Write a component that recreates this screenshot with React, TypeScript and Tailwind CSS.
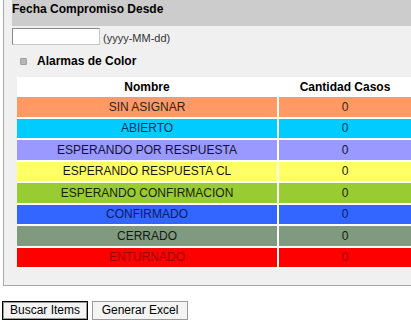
const estados = [
  { nombre: 'SIN ASIGNAR', bg: 'bg-[#ff9966]', fg: 'text-[#33231a]' },
  { nombre: 'ABIERTO', bg: 'bg-[#00ccff]', fg: 'text-[#003355]' },
  { nombre: 'ESPERANDO POR RESPUESTA', bg: 'bg-[#9999ff]', fg: 'text-[#111133]' },
  { nombre: 'ESPERANDO RESPUESTA CL', bg: 'bg-[#ffff66]', fg: 'text-[#1a1a0a]' },
  { nombre: 'ESPERANDO CONFIRMACION', bg: 'bg-[#99cc33]', fg: 'text-[#1a220a]' },
  { nombre: 'CONFIRMADO', bg: 'bg-[#3366ff]', fg: 'text-[#0a1a66]' },
  { nombre: 'CERRADO', bg: 'bg-[#7f9a7f]', fg: 'text-[#111a11]' },
  { nombre: 'ENTURNADO', bg: 'bg-[#ff0000]', fg: 'text-[#990000]' },
];

export default function App() {
  return (
    <div className="w-[411px] h-[322px] overflow-hidden bg-white font-['Liberation_Sans',Arial,sans-serif] text-[12px] text-black">
      <div className="ml-[3px] w-[430px] h-[286px] border-l border-b border-[#a8a8a8] bg-[#f0f0f0] pl-[8px]">
        <div className="h-[26px] bg-[#cccccc] pt-[1px] font-bold text-[12px] leading-[16px]">
          Fecha Compromiso Desde
        </div>
        <div className="flex items-end mt-[2px] h-[17px]">
          <input
            type="text"
            className="w-[88px] h-[17px] bg-white border border-t-[#8a8a8a] border-l-[#8a8a8a] border-r-[#c8c8c8] border-b-[#c8c8c8] outline-none"
          />
          <span className="ml-[3px] text-[11px] leading-[13px] text-[#333]">(yyyy-MM-dd)</span>
        </div>
        <div className="flex items-center h-[14px] mt-[9px]">
          <span className="ml-[8px] w-[7px] h-[7px] rounded-[1px] bg-[#b8b8b8] border border-[#a0a0a0]" />
          <span className="ml-[10px] font-bold">Alarmas de Color</span>
        </div>
        <div className="ml-[5px] mt-[9px] w-[420px] bg-white">
          <div className="flex h-[20px] items-center font-bold border-b-[1px] border-white pt-[1px]">
            <div className="w-[260px] text-center">Nombre</div>
            <div className="w-[2px] self-stretch bg-white" />
            <div className="w-[132px] text-center">Cantidad Casos</div>
          </div>
          {estados.map((e) => (
            <div key={e.nombre} className={`flex h-[21.5px] border-b-2 border-white ${e.fg}`}>
              <div className={`w-[260px] flex items-center justify-center ${e.bg}`}>{e.nombre}</div>
              <div className="w-[2px] bg-white" />
              <div className={`w-[158px] flex items-center ${e.bg}`}>
                <span className="w-[132px] text-center">0</span>
              </div>
            </div>
          ))}
        </div>
      </div>
      <div className="flex mt-[15px] ml-[2px] gap-[4px]">
        <button className="w-[86px] h-[19px] border border-black bg-[#f4f4f4] shadow-[inset_0_0_0_1px_#9a9a9a] text-[12px] leading-[15px]">
          Buscar Items
        </button>
        <button className="w-[96px] h-[19px] border border-[#9a9a9a] bg-[#f4f4f4] text-[12px] leading-[15px]">
          Generar Excel
        </button>
      </div>
    </div>
  );
}
